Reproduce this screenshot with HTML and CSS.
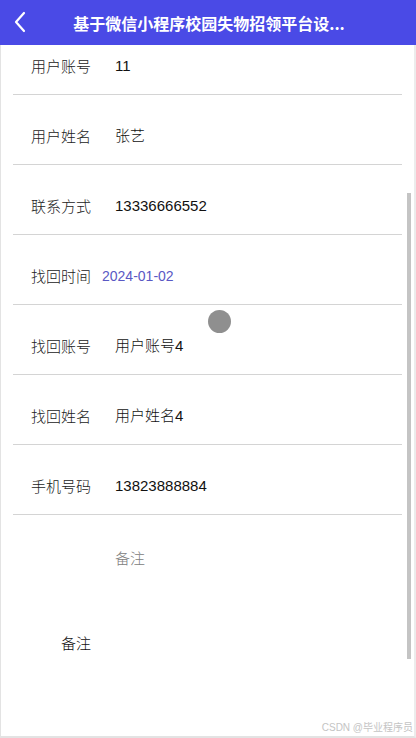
FILE: index.html
```html
<!DOCTYPE html>
<html lang="zh-CN">
<head>
<meta charset="utf-8">
<title>详情</title>
<link rel="stylesheet" href="styles.css">
</head>
<body>
<div class="app">
  <header class="navbar">
    <svg class="back" viewBox="0 0 14 22" width="14" height="22" aria-hidden="true">
      <path d="M11 2 L3 11 L11 20" fill="none" stroke="#fff" stroke-width="2.2" stroke-linecap="round" stroke-linejoin="round"/>
    </svg>
    <h1 class="title">基于微信小程序校园失物招领平台设...</h1>
  </header>
  <main class="page">
    <div class="scroll">
      <form class="form">
        <div class="row"><span class="label">用户账号</span><span class="value">11</span></div>
        <div class="row"><span class="label">用户姓名</span><span class="value">张艺</span></div>
        <div class="row"><span class="label">联系方式</span><span class="value">13336666552</span></div>
        <div class="row"><span class="label">找回时间</span><span class="picker">2024-01-02</span></div>
        <div class="row"><span class="label">找回账号</span><span class="value">用户账号4</span></div>
        <div class="row"><span class="label">找回姓名</span><span class="value">用户姓名4</span></div>
        <div class="row"><span class="label">手机号码</span><span class="value">13823888884</span></div>
        <div class="note">
          <div class="textarea"><span class="placeholder">备注</span></div>
          <div class="note-label">备注</div>
        </div>
      </form>
    </div>
    <div class="scrollbar"></div>
    <div class="touch"></div>
    <div class="mark">CSDN @毕业程序员</div>
  </main>
</div>
</body>
</html>
```
FILE: styles.css
```css
* { box-sizing: border-box; }

html, body {
  margin: 0;
  padding: 0;
  width: 416px;
  height: 738px;
  overflow: hidden;
  background: #fff;
  font-family: "Liberation Sans", "Noto Sans CJK SC", sans-serif;
}

.app {
  display: flex;
  flex-direction: column;
  height: 738px;
}

.navbar {
  position: relative;
  height: 45px;
  flex: none;
  background: #4a4ae6;
  display: flex;
  align-items: center;
  justify-content: center;
}

.back {
  position: absolute;
  left: 13px;
  top: 11px;
}

.title {
  margin: 0 0 0 2px;
  color: #fff;
  font-size: 16px;
  font-weight: bold;
  font-family: "Noto Sans CJK SC", sans-serif;
  line-height: 24px;
}

.page {
  position: relative;
  flex: 1;
  border-left: 1px solid #e3e3e3;
  border-right: 2px solid #ececec;
  border-bottom: 2px solid #e3e3e3;
  overflow: hidden;
}

.scroll {
  height: 100%;
  overflow: hidden;
}

.form {
  margin: -20px 0 0 0;
}

.row {
  display: flex;
  align-items: flex-start;
  height: 70px;
  margin: 0 12px 0 12px;
  padding: 29px 0 0 18px;
  border-bottom: 1px solid #d4d4d4;
  font-size: 15px;
  line-height: 24px;
}

.label {
  width: 71px;
  flex: none;
  color: #222;
  font-family: "Noto Sans CJK SC", sans-serif;
  font-weight: 300;
}

.value {
  padding-left: 13px;
  color: #111;
  font-weight: 300;
}

.picker {
  color: #5a58c4;
  font-size: 14px;
}

.note {
  font-size: 15px;
  line-height: 24px;
}

.textarea {
  height: 86px;
  padding: 31px 0 0 114px;
}

.placeholder {
  color: #808080;
  font-family: "Noto Sans CJK SC", sans-serif;
  font-weight: 300;
}

.note-label {
  padding: 30px 0 0 60px;
  color: #111;
  font-family: "Noto Sans CJK SC", sans-serif;
  font-weight: 300;
}

.scrollbar {
  position: absolute;
  right: 3px;
  top: 148px;
  width: 4px;
  height: 466px;
  background: #c4c4c4;
}

.touch {
  position: absolute;
  left: 207px;
  top: 265px;
  width: 23px;
  height: 23px;
  border-radius: 50%;
  background: #8f8f8f;
  filter: blur(0.6px);
}

.mark {
  position: absolute;
  right: 1px;
  bottom: 2px;
  font-size: 10px;
  color: #c4c4c4;
  font-family: "Liberation Sans", "Noto Sans CJK SC", sans-serif;
}
```
